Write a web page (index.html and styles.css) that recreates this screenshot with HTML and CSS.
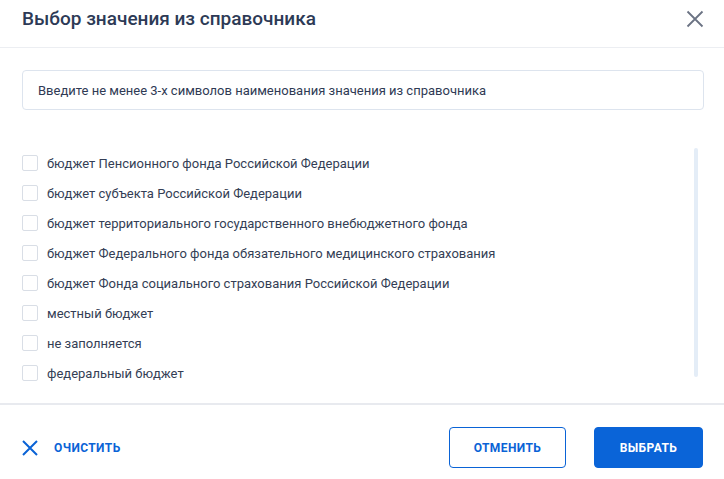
FILE: index.html
```html
<!DOCTYPE html>
<html lang="ru">
<head>
    <meta charset="UTF-8">
    <title>Выбор значения из справочника</title>
    <link rel="stylesheet" href="styles.css">
</head>
<body>
    <div class="dialog">
        <div class="dialog-header">
            <h2>Выбор значения из справочника</h2>
            <button class="close-btn" aria-label="Закрыть">
                <svg width="18" height="18" viewBox="0 0 18 18"><path d="M1.5 1.5L16.5 16.5M16.5 1.5L1.5 16.5" stroke="#6b7384" stroke-width="1.8" fill="none"/></svg>
            </button>
        </div>

        <div class="dialog-body">
            <div class="search">Введите не менее 3-х символов наименования значения из справочника</div>

            <div class="list-wrap">
                <ul class="list">
                    <li><span class="checkbox"></span>бюджет Пенсионного фонда Российской Федерации</li>
                    <li><span class="checkbox"></span>бюджет субъекта Российской Федерации</li>
                    <li><span class="checkbox"></span>бюджет территориального государственного внебюджетного фонда</li>
                    <li><span class="checkbox"></span>бюджет Федерального фонда обязательного медицинского страхования</li>
                    <li><span class="checkbox"></span>бюджет Фонда социального страхования Российской Федерации</li>
                    <li><span class="checkbox"></span>местный бюджет</li>
                    <li><span class="checkbox"></span>не заполняется</li>
                    <li><span class="checkbox"></span>федеральный бюджет</li>
                </ul>
                <div class="scroll-track"></div>
            </div>
        </div>

        <div class="dialog-footer">
            <button class="clear-btn">
                <svg width="16" height="16" viewBox="0 0 16 16"><path d="M1 1L15 15M15 1L1 15" stroke="#0a63d6" stroke-width="2" fill="none"/></svg>
                Очистить
            </button>
            <div class="actions">
                <button class="btn btn-outline">Отменить</button>
                <button class="btn btn-primary">Выбрать</button>
            </div>
        </div>
    </div>
</body>
</html>
```

FILE: styles.css
```css
body {
    margin: 0;
    font-family: Roboto, "Noto Sans", sans-serif;
    background: #fff;
    color: #343e55;
}

.dialog {
    width: 724px;
    height: 479px;
    display: flex;
    flex-direction: column;
    background: #fff;
}

.dialog-header {
    height: 48px;
    box-sizing: border-box;
    padding: 7px 20px 0 22px;
    display: flex;
    justify-content: space-between;
    align-items: flex-start;
    border-bottom: 1px solid #eceef2;
}

.dialog-header h2 {
    margin: 0;
    font-size: 19px;
    line-height: 24px;
    font-weight: 500;
    color: #2d3a56;
}

.close-btn {
    background: none;
    border: none;
    padding: 0;
    margin-top: 3px;
    cursor: pointer;
    line-height: 0;
}

.dialog-body {
    padding: 22px 20px 0 22px;
}

.search {
    height: 40px;
    box-sizing: border-box;
    border: 1px solid #dde4ee;
    border-radius: 4px;
    padding: 0 15px;
    display: flex;
    align-items: center;
    font-size: 13px;
    color: #2f3a54;
}

.list-wrap {
    margin-top: 38px;
    height: 240px;
    display: flex;
    justify-content: space-between;
}

.list {
    list-style: none;
    margin: 0;
    padding: 0;
}

.list li {
    height: 30px;
    display: flex;
    align-items: center;
    gap: 9px;
    font-size: 13px;
    color: #343e55;
}

.checkbox {
    width: 16px;
    height: 16px;
    box-sizing: border-box;
    border: 1px solid #d9dee6;
    border-radius: 2px;
    background: #fff;
}

.scroll-track {
    width: 4px;
    height: 229px;
    margin-right: 6px;
    border-radius: 2px;
    background: #e4edf7;
}

.dialog-footer {
    margin-top: 15px;
    border-top: 2px solid #e8eaef;
    padding: 22px 21px 0 22px;
    display: flex;
    justify-content: space-between;
    align-items: center;
}

.clear-btn {
    background: none;
    border: none;
    padding: 0;
    display: flex;
    align-items: center;
    gap: 16px;
    font-family: inherit;
    font-size: 12px;
    font-weight: 700;
    letter-spacing: 0.4px;
    text-transform: uppercase;
    color: #0a63d6;
    cursor: pointer;
}

.actions {
    display: flex;
    gap: 28px;
}

.btn {
    height: 41px;
    box-sizing: border-box;
    border-radius: 4px;
    font-family: inherit;
    font-size: 12px;
    font-weight: 700;
    letter-spacing: 0.4px;
    text-transform: uppercase;
    cursor: pointer;
}

.btn-outline {
    width: 117px;
    background: #fff;
    border: 1px solid #0a63d6;
    color: #0a63d6;
}

.btn-primary {
    width: 109px;
    background: #0a64d8;
    border: 1px solid #0a64d8;
    color: #fff;
}
```
